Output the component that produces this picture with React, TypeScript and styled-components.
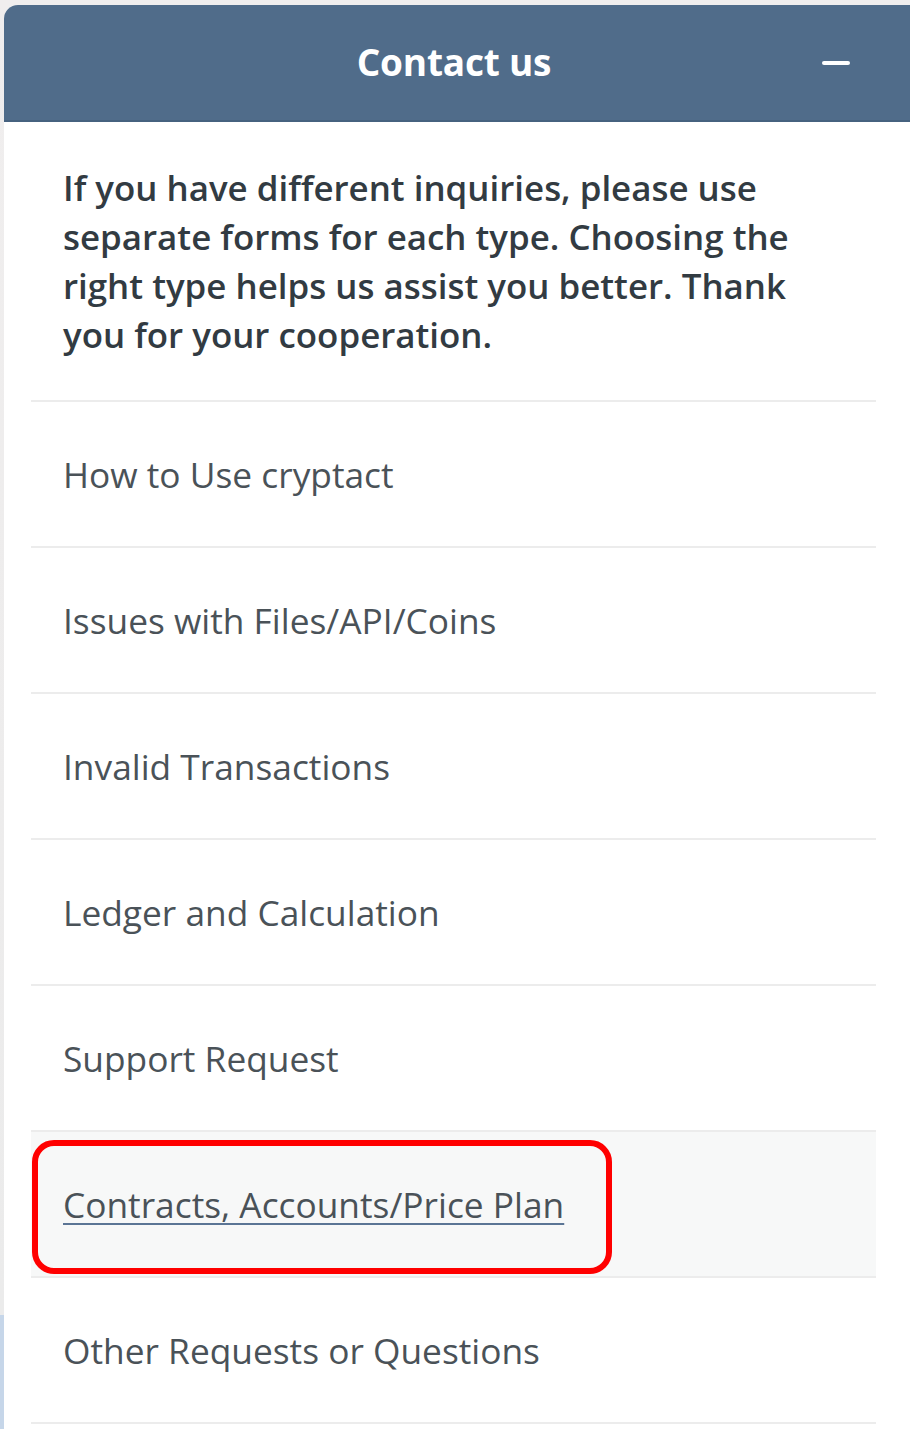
import React from "react";
import styled, { createGlobalStyle } from "styled-components";

const GlobalStyle = createGlobalStyle`
  html, body {
    margin: 0;
    padding: 0;
  }
  body {
    background: #f0eeee;
    font-family: "Open Sans", "Noto Sans", Arial, sans-serif;
  }
`;

const Page = styled.div`
  min-height: 1429px;
  padding-top: 5px;
  box-sizing: border-box;
  background: linear-gradient(to bottom, #f0eeee 0, #ebebeb 1315px, #c6d6e9 1315px);
  display: flex;
`;

const Panel = styled.section`
  flex: 1;
  margin-left: 4px;
  background: #ffffff;
  border-top-left-radius: 14px;
  overflow: hidden;
`;

const Header = styled.header`
  height: 115px;
  background: #506c8a;
  border-bottom: 2px solid #46627f;
  display: grid;
  grid-template-columns: 1fr auto 1fr;
  align-items: center;
  color: #ffffff;
`;

const Title = styled.h1`
  grid-column: 2;
  margin: 0 0 3px;
  font-size: 37px;
  font-weight: 700;
  letter-spacing: -0.2px;
  transform: translateX(-3px);
`;

const MinimizeButton = styled.button`
  justify-self: end;
  margin-right: 58px;
  width: 32px;
  height: 32px;
  border: none;
  background: transparent;
  padding: 0;
  display: flex;
  align-items: center;
  justify-content: center;
  cursor: pointer;
  &::before {
    content: "";
    display: block;
    width: 28px;
    height: 4px;
    border-radius: 2px;
    background: #ffffff;
  }
`;

const Body = styled.div`
  padding: 0 34px 0 27px;
`;

const Intro = styled.p`
  margin: 0;
  padding: 41px 40px 41px 32px;
  font-size: 34.9px;
  line-height: 49px;
  font-weight: 600;
  color: #323b42;
  border-bottom: 2px solid #ececec;
`;

const Item = styled.a<{ $active?: boolean }>`
  position: relative;
  display: flex;
  align-items: center;
  height: 144px;
  padding-left: 32px;
  border-bottom: 2px solid #ececec;
  background: ${(p) => (p.$active ? "#f7f8f8" : "#ffffff")};
  font-size: 35.3px;
  color: #4a5258;
  text-decoration: none;
  cursor: pointer;
`;

const ItemLabel = styled.span<{ $active?: boolean }>`
  text-decoration: ${(p) => (p.$active ? "underline" : "none")};
  text-decoration-color: #5b7595;
  text-decoration-thickness: 2px;
  text-underline-offset: 5px;
`;

const Highlight = styled.span`
  position: absolute;
  left: 1px;
  top: 8px;
  width: 580px;
  height: 134px;
  box-sizing: border-box;
  border: 6px solid #ff0000;
  border-radius: 22px;
  pointer-events: none;
`;

const items = [
  "How to Use cryptact",
  "Issues with Files/API/Coins",
  "Invalid Transactions",
  "Ledger and Calculation",
  "Support Request",
  "Contracts, Accounts/Price Plan",
  "Other Requests or Questions",
];

export default function App() {
  return (
    <>
      <GlobalStyle />
      <Page>
        <Panel>
          <Header>
            <Title>Contact us</Title>
            <MinimizeButton aria-label="Minimize" />
          </Header>
          <Body>
            <Intro>
              If you have different inquiries, please use separate forms for each type. Choosing the right type helps us assist you better. Thank you for your cooperation.
            </Intro>
            {items.map((label, i) => {
              const active = i === 5;
              return (
                <Item key={label} $active={active}>
                  <ItemLabel $active={active}>{label}</ItemLabel>
                  {active && <Highlight />}
                </Item>
              );
            })}
          </Body>
        </Panel>
      </Page>
    </>
  );
}
